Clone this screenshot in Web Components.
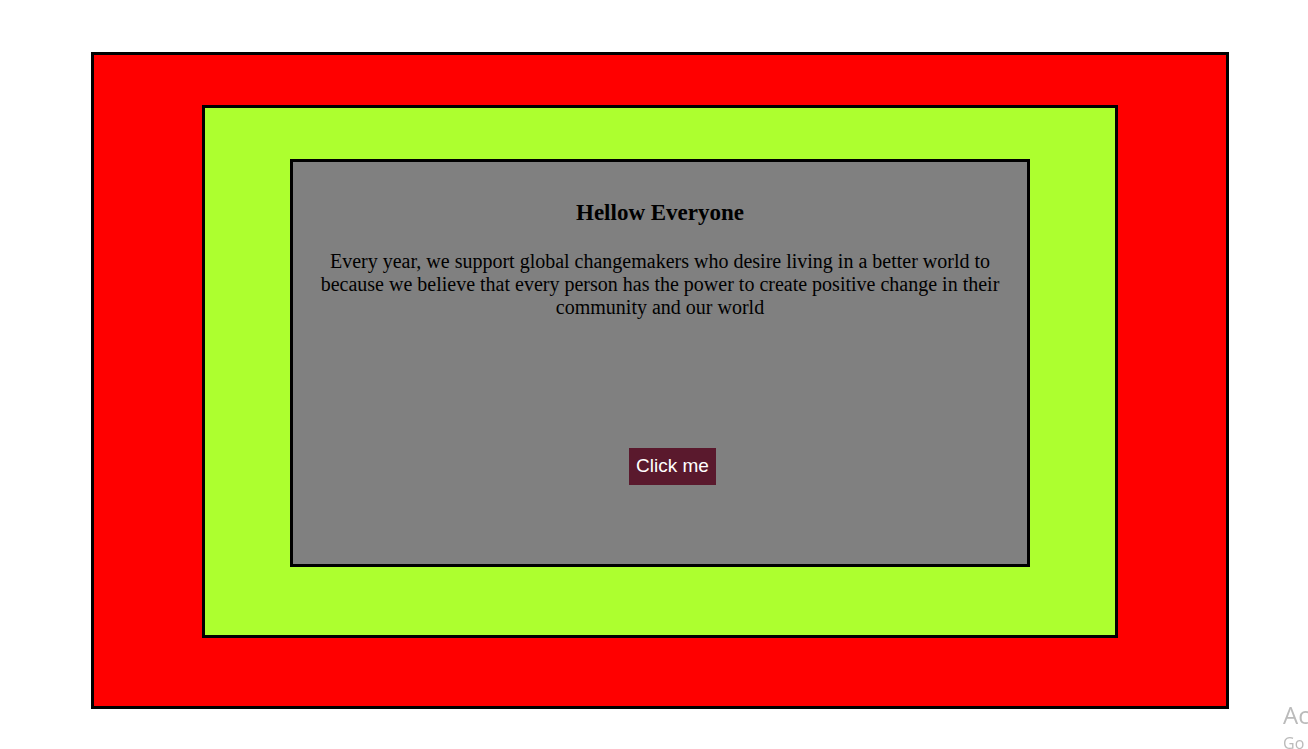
<!DOCTYPE html>
<html lang="en">
<head>
<meta charset="utf-8">
<title>Hellow Everyone</title>
<style>
body { margin: 0; background: #fff; font-family: "Liberation Serif", "Times New Roman", serif; color: #000; }
.outer { --fill: #f00; --pad: 50px 108px 68px; }
.middle { --fill: greenyellow; --pad: 51px 85px 68px; }
.inner { --fill: gray; --pad: 0 20px; }
main { padding: 52px 79px 40px 91px; }
</style>
</head>
<body>
<main>
  <color-frame class="outer">
    <color-frame class="middle">
      <color-frame class="inner">
        <welcome-card>
          <span slot="title">Hellow Everyone</span>
          Every year, we support global changemakers who desire living in a better world to because we believe that every person has the power to create positive change in their community and our world
          <click-button slot="action">Click me</click-button>
        </welcome-card>
      </color-frame>
    </color-frame>
  </color-frame>
</main>
<corner-notice><span slot="title">Ac</span>Go</corner-notice>
<script>
const define = (name, markup) => {
  const template = document.createElement("template");
  template.innerHTML = markup;
  customElements.define(name, class extends HTMLElement {
    constructor() {
      super();
      this.attachShadow({ mode: "open" }).append(template.content.cloneNode(true));
    }
  });
};

define("color-frame", `
  <style>
    :host { display: block; box-sizing: border-box; border: 3px solid #000; background: var(--fill); padding: var(--pad); }
  </style>
  <slot></slot>`);

define("welcome-card", `
  <style>
    :host { display: flex; flex-direction: column; text-align: center; padding: 38px 0 79px; }
    h3 { margin: 0; font-size: 23px; line-height: 26px; }
    p { margin: 24px 0 129px; font-size: 20px; line-height: 23px; }
    .action { align-self: center; padding-left: 25px; }
  </style>
  <h3><slot name="title"></slot></h3>
  <p><slot></slot></p>
  <div class="action"><slot name="action"></slot></div>`);

define("click-button", `
  <style>
    :host { display: block; }
    button { display: block; height: 37px; margin: 0; padding: 0 7px 2px; border: 0; background: #5a192d; color: #fff; font: 19px "Liberation Sans", Arial, sans-serif; }
  </style>
  <button type="button"><slot></slot></button>`);

define("corner-notice", `
  <style>
    :host { display: block; position: fixed; right: 0; bottom: 0; width: 25px; color: #bbb; font-family: "Open Sans", "Noto Sans", sans-serif; white-space: nowrap; }
    .title { font-size: 24px; line-height: 32px; }
    .text { font-size: 16px; line-height: 18px; padding-top: 3px; height: 15px; }
  </style>
  <div class="title"><slot name="title"></slot></div>
  <div class="text"><slot></slot></div>`);
</script>
</body>
</html>
